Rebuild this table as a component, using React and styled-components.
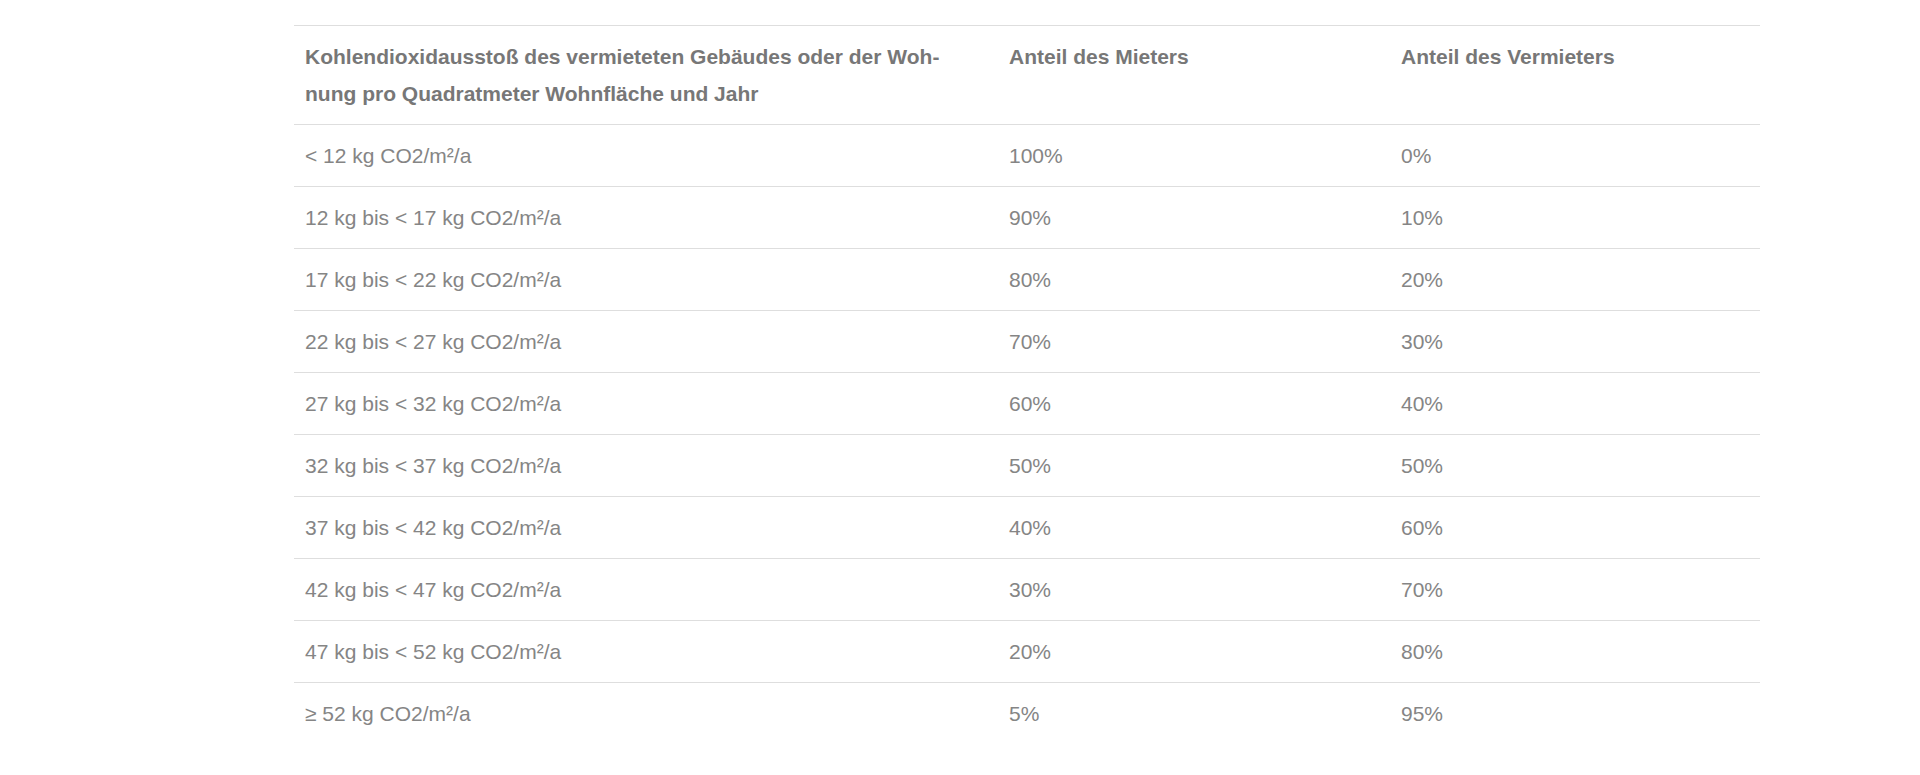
import React from "react";
import styled, { createGlobalStyle } from "styled-components";

const GlobalStyle = createGlobalStyle`
  html, body {
    margin: 0;
    padding: 0;
    background: #ffffff;
  }
  body {
    font-family: "Liberation Sans", Arial, Helvetica, sans-serif;
  }
`;

const Page = styled.main`
  min-height: 775px;
  box-sizing: border-box;
  padding: 25px 0 0 294px;
  background: #ffffff;
`;

const Table = styled.table`
  width: 1466px;
  border-collapse: collapse;
  table-layout: fixed;
  font-size: 21px;
  line-height: 37px;
`;

const Col = styled.col`
  width: ${(p) => p.$w}px;
`;

const HeadRow = styled.tr`
  border-top: 1px solid #dedede;
  border-bottom: 1px solid #dedede;
`;

const HeadCell = styled.th`
  text-align: left;
  vertical-align: top;
  font-weight: 700;
  color: #777777;
  padding: 12px 12px 12px 11px;
`;

const HeadText = styled.span`
  display: block;
  max-width: ${(p) => p.$max || 10000}px;
  hyphens: manual;
`;

const Row = styled.tr`
  border-top: 1px solid #dedede;
  &:first-child {
    border-top: none;
  }
`;

const Cell = styled.td`
  text-align: left;
  vertical-align: top;
  font-weight: 400;
  color: #858585;
  padding: 12px 12px 12px 11px;
`;

const rows = [
  ["< 12 kg CO2/m²/a", "100%", "0%"],
  ["12 kg bis < 17 kg CO2/m²/a", "90%", "10%"],
  ["17 kg bis < 22 kg CO2/m²/a", "80%", "20%"],
  ["22 kg bis < 27 kg CO2/m²/a", "70%", "30%"],
  ["27 kg bis < 32 kg CO2/m²/a", "60%", "40%"],
  ["32 kg bis < 37 kg CO2/m²/a", "50%", "50%"],
  ["37 kg bis < 42 kg CO2/m²/a", "40%", "60%"],
  ["42 kg bis < 47 kg CO2/m²/a", "30%", "70%"],
  ["47 kg bis < 52 kg CO2/m²/a", "20%", "80%"],
  ["≥ 52 kg CO2/m²/a", "5%", "95%"],
];

export default function App() {
  return (
    <>
      <GlobalStyle />
      <Page lang="de">
        <Table>
          <colgroup>
            <Col $w={704} />
            <Col $w={392} />
            <Col $w={370} />
          </colgroup>
          <thead>
            <HeadRow>
              <HeadCell>
                <HeadText $max={655}>
                  {"Kohlendioxidausstoß des vermieteten Gebäudes oder der Woh\u00ADnung pro Quadratmeter Wohnfläche und Jahr"}
                </HeadText>
              </HeadCell>
              <HeadCell>
                <HeadText>Anteil des Mieters</HeadText>
              </HeadCell>
              <HeadCell>
                <HeadText>Anteil des Vermieters</HeadText>
              </HeadCell>
            </HeadRow>
          </thead>
          <tbody>
            {rows.map((r) => (
              <Row key={r[0]}>
                <Cell>{r[0]}</Cell>
                <Cell>{r[1]}</Cell>
                <Cell>{r[2]}</Cell>
              </Row>
            ))}
          </tbody>
        </Table>
      </Page>
    </>
  );
}
